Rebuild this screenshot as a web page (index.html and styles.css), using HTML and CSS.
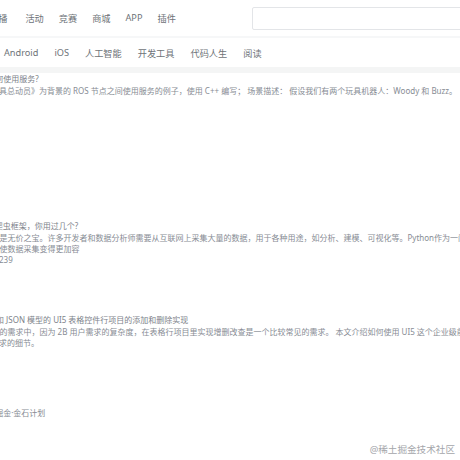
FILE: index.html
```html
<!DOCTYPE html>
<html lang="zh">
<head>
<meta charset="utf-8">
<title>掘金</title>
<link rel="stylesheet" href="styles.css">
</head>
<body>
<header class="top">
  <nav class="main-nav">
    <span class="nav-item first">直播</span>
    <span class="nav-item">活动</span>
    <span class="nav-item">竞赛</span>
    <span class="nav-item">商城</span>
    <span class="nav-item">APP</span>
    <span class="nav-item">插件</span>
  </nav>
  <div class="search"></div>
</header>
<div class="sep"></div>
<nav class="tags">
  <span class="tag">Android</span>
  <span class="tag">iOS</span>
  <span class="tag">人工智能</span>
  <span class="tag">开发工具</span>
  <span class="tag">代码人生</span>
  <span class="tag">阅读</span>
</nav>
<div class="band"></div>
<main class="list">
  <article class="entry e1">
    <div class="title t1">何使用服务?</div>
    <div class="abs s1">具总动员》为背景的 ROS 节点之间使用服务的例子，使用 C++ 编写； 场景描述： 假设我们有两个玩具机器人：Woody 和 Buzz。</div>
  </article>
  <article class="entry e2">
    <div class="title t2">爬虫框架，你用过几个?</div>
    <div class="abs s2">是无价之宝。许多开发者和数据分析师需要从互联网上采集大量的数据，用于各种用途，如分析、建模、可视化等。Python作为一门</div>
    <div class="abs s2">使数据采集变得更加容</div>
    <div class="abs s4">239</div>
  </article>
  <article class="entry e3">
    <div class="title t3">和 JSON 模型的 UI5 表格控件行项目的添加和删除实现</div>
    <div class="abs s2">的需求中，因为 2B 用户需求的复杂度，在表格行项目里实现增删改查是一个比较常见的需求。 本文介绍如何使用 UI5 这个企业级前端</div>
    <div class="abs s4">求的细节。</div>
  </article>
  <div class="plan">掘金·金石计划</div>
</main>
<div class="mark">@稀土掘金技术社区</div>
</body>
</html>
```
FILE: styles.css
```css
html, body {
  margin: 0;
  padding: 0;
  background: #fff;
  width: 460px;
  height: 460px;
  overflow: hidden;
  font-family: "Noto Sans", "Noto Sans CJK SC", sans-serif;
}

.top {
  height: 36px;
  display: flex;
  align-items: center;
  white-space: nowrap;
}

.main-nav {
  display: flex;
  gap: 15px;
  margin-left: -11px;
  font-size: 9.2px;
  color: #6e7378;
}

.nav-item.first {
  margin-right: 3px;
}

.search {
  margin-left: auto;
  margin-right: -10px;
  width: 216px;
  height: 21px;
  border: 1px solid #e3e5e8;
  border-radius: 2px;
  margin-top: 1px;
}

.sep {
  height: 2px;
  background: #f6f7f8;
}

.tags {
  height: 29px;
  display: flex;
  align-items: center;
  gap: 16px;
  padding-left: 4px;
  font-size: 9.2px;
  color: #6e7378;
  white-space: nowrap;
}

.band {
  height: 6px;
  background: #f4f5f5;
}

.list {
  white-space: nowrap;
  color: #878c94;
  font-size: 8px;
}

.title {
  line-height: 12px;
  color: #7d828a;
}

.abs {
  line-height: 11px;
}

.t1 { text-indent: -4.8px; }
.t2 { text-indent: -5.3px; }
.t3 { text-indent: -4px; }
.s1 { text-indent: -1px; }
.s2 { text-indent: -0.5px; }
.s4 { text-indent: -1px; }

.e2 {
  margin-top: 124px;
}

.e3 {
  margin-top: 49px;
}

.plan {
  margin-top: 59px;
  line-height: 12px;
  text-indent: -4.8px;
}

.mark {
  display: flex;
  justify-content: flex-end;
  padding-right: 5px;
  margin-top: 24px;
  font-size: 9.6px;
  line-height: 14px;
  color: #a4a6aa;
  white-space: nowrap;
}
```
